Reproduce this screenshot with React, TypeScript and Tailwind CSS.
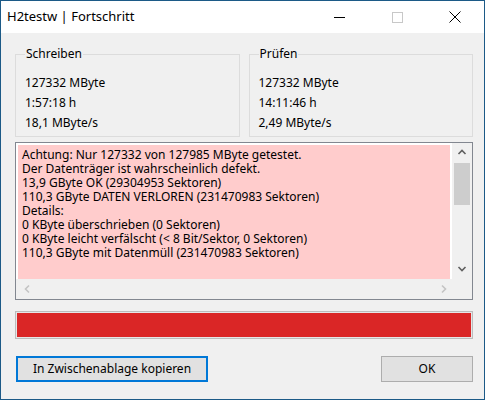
import React from "react";

const Chevron = ({ dir, color }: { dir: "up" | "down" | "left" | "right"; color: string }) => {
  const paths: Record<string, string> = {
    up: "M1.5 6 L5 2.5 L8.5 6",
    down: "M1.5 3 L5 6.5 L8.5 3",
    left: "M6 1.5 L2.5 5 L6 8.5",
    right: "M3 1.5 L6.5 5 L3 8.5",
  };
  return (
    <svg width="10" height="10" viewBox="0 0 10 10">
      <path d={paths[dir]} fill="none" stroke={color} strokeWidth="1.6" />
    </svg>
  );
};

const Group = ({ title, lines }: { title: string; lines: string[] }) => (
  <fieldset className="flex-1 border border-[#dcdcdc] h-[90px] px-[9px] pt-[12px]">
    <legend className="px-[1px] leading-[14px]">{title}</legend>
    <div className="flex flex-col">
      {lines.map((l) => (
        <div key={l} className="leading-[20px]">{l}</div>
      ))}
    </div>
  </fieldset>
);

const logLines = [
  "Achtung: Nur 127332 von 127985 MByte getestet.",
  "Der Datenträger ist wahrscheinlich defekt.",
  "13,9 GByte OK (29304953 Sektoren)",
  "110,3 GByte DATEN VERLOREN (231470983 Sektoren)",
  "Details:",
  "0 KByte überschrieben (0 Sektoren)",
  "0 KByte leicht verfälscht (< 8 Bit/Sektor, 0 Sektoren)",
  "110,3 GByte mit Datenmüll (231470983 Sektoren)",
];

export default function App() {
  return (
    <div
      className="w-[485px] h-[400px] bg-[#f0f0f0] border border-[#1c5a87] flex flex-col text-[12px] text-black overflow-hidden"
      style={{ fontFamily: '"Noto Sans", "Liberation Sans", sans-serif' }}
    >
      {/* Title bar */}
      <div className="h-[32px] bg-white flex items-center shrink-0">
        <div className="pl-[6px] flex-1 text-[13px]">H2testw | Fortschritt</div>
        <div className="w-[58px] h-full flex items-center justify-center">
          <div className="w-[11px] h-[1px] bg-black" />
        </div>
        <div className="w-[58px] h-full flex items-center justify-center">
          <div className="w-[11px] h-[11px] border border-[#c8c8c8]" />
        </div>
        <div className="w-[58px] h-full flex items-center justify-center">
          <svg width="12" height="12" viewBox="0 0 12 12">
            <path d="M0.5 0.5 L11.5 11.5 M11.5 0.5 L0.5 11.5" stroke="#000" strokeWidth="1" />
          </svg>
        </div>
      </div>

      {/* Client */}
      <div className="flex flex-col pl-[14px] pr-[11px] pt-[14px]">
        <div className="flex gap-[9px]">
          <Group title="Schreiben" lines={["127332 MByte", "1:57:18 h", "18,1 MByte/s"]} />
          <Group title="Prüfen" lines={["127332 MByte", "14:11:46 h", "2,49 MByte/s"]} />
        </div>

        {/* Text area */}
        <div className="mt-[5px] h-[158px] border border-[#828790] bg-white flex">
          <div className="flex-1 flex flex-col">
            <div className="flex-1 pl-[2px] pt-[2px] pr-[2px] overflow-hidden">
              <div className="h-full bg-[#ffcccc] pl-[4px] pt-[3px] overflow-hidden">
                {logLines.map((l, i) => (
                  <div key={i} className="leading-[14px] whitespace-nowrap h-[14px]">{l}</div>
                ))}
              </div>
            </div>
            <div className="h-[20px] bg-[#f0f0f0] flex items-center justify-between pl-[7px] pr-[3px]">
              <Chevron dir="left" color="#c4c4c4" />
              <Chevron dir="right" color="#c4c4c4" />
            </div>
          </div>
          <div className="w-[20px] bg-[#f0f0f0] flex flex-col">
            <div className="h-[20px] flex items-center justify-center">
              <Chevron dir="up" color="#606060" />
            </div>
            <div className="flex-1 flex flex-col px-[2px]">
              <div className="h-[42px] bg-[#cdcdcd]" />
            </div>
            <div className="h-[20px] flex items-center justify-center">
              <Chevron dir="down" color="#606060" />
            </div>
            <div className="h-[20px]" />
          </div>
        </div>

        {/* Progress bar */}
        <div className="mt-[11px] h-[28px] border border-[#bcbcbc] bg-[#e6e6e6] p-[1px]">
          <div className="h-full bg-[#da2626]" />
        </div>

        {/* Buttons */}
        <div className="mt-[17px] flex justify-between">
          <button className="ml-[1px] w-[192px] h-[26px] border-2 border-[#0078d7] bg-[#e1e1e1] text-[12px] leading-none">
            In Zwischenablage kopieren
          </button>
          <button className="w-[92px] h-[26px] border border-[#adadad] bg-[#e1e1e1] text-[12px] leading-none">
            OK
          </button>
        </div>
      </div>
    </div>
  );
}
